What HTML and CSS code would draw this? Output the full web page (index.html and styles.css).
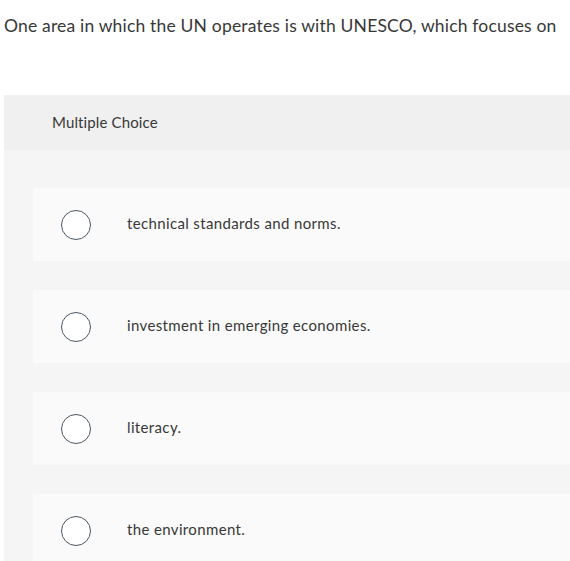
FILE: index.html
```html
<!DOCTYPE html>
<html>
<head>
<meta charset="utf-8">
<link rel="stylesheet" href="styles.css">
</head>
<body>
<p class="question">One area in which the UN operates is with UNESCO, which focuses on</p>
<div class="panel">
  <div class="panel-head">Multiple Choice</div>
  <div class="panel-body">
    <div class="option"><span class="radio"></span><span class="label">technical standards and norms.</span></div>
    <div class="option"><span class="radio"></span><span class="label">investment in emerging economies.</span></div>
    <div class="option"><span class="radio"></span><span class="label">literacy.</span></div>
    <div class="option"><span class="radio"></span><span class="label">the environment.</span></div>
  </div>
</div>
</body>
</html>
```
FILE: styles.css
```css
html, body {
  margin: 0;
  padding: 0;
  background: #ffffff;
  font-family: Lato, "Open Sans", sans-serif;
  color: #383838;
  overflow: hidden;
}
.question {
  margin: 0;
  padding: 16px 0 0 4px;
  font-size: 17.5px;
  letter-spacing: 0.18px;
  line-height: 20px;
  white-space: nowrap;
}
.panel {
  margin: 59px 0 0 4px;
  background: #f5f5f5;
  height: 466px;
}
.panel-head {
  height: 55px;
  box-sizing: border-box;
  padding: 0 0 2px 48px;
  background: #f0f0f0;
  display: flex;
  align-items: center;
  font-size: 15px;
  letter-spacing: 0.13px;
}
.panel-body {
  padding: 38px 0 0 29px;
  display: flex;
  flex-direction: column;
  gap: 29px;
}
.option {
  height: 73px;
  background: #fafafa;
  display: flex;
  align-items: center;
  padding-left: 28px;
  gap: 36px;
  font-size: 15px;
  letter-spacing: 0.36px;
}
.label {
  padding-bottom: 3px;
}
.radio {
  width: 28px;
  height: 28px;
  border: 1.4px solid #4b5763;
  border-radius: 50%;
  background: #ffffff;
  flex: none;
}
```
